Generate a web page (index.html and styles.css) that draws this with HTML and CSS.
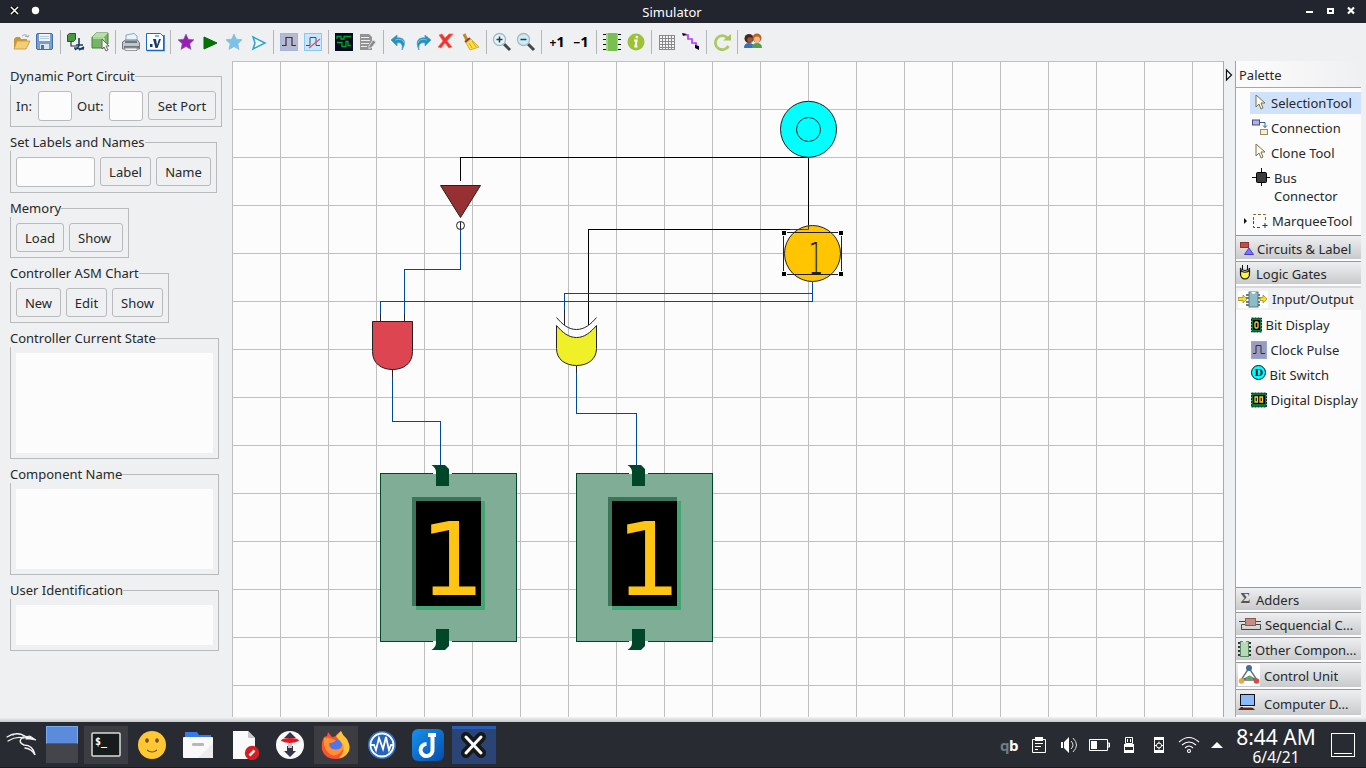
FILE: index.html
```html
<!DOCTYPE html>
<html lang="en">
<head>
<meta charset="utf-8">
<title>Simulator</title>
<link rel="stylesheet" href="styles.css">
</head>
<body>
<header class="titlebar">
  <svg class="win-left" width="60" height="23"><path d="M11.500 7.500l6 6M17.500 7.500l-6 6" stroke="#000" stroke-width="3.500"/><path d="M11 7l7 7M18 7l-7 7" stroke="#fff" stroke-width="1.500"/><circle cx="35.500" cy="10.500" r="3.700" fill="#fff"/></svg>
  <span class="win-title">Simulator</span>
  <svg class="win-right" width="60" height="23"><path d="M0 12h7" stroke="#fff" stroke-width="2"/><rect x="22" y="9" width="5" height="4" fill="none" stroke="#fff" stroke-width="2"/><path d="M42 7.500l6 6M48 7.500l-6 6" stroke="#fff" stroke-width="2.200"/></svg>
</header>

<nav class="toolbar">
  <svg viewBox="0 0 24 24"><path d="M5 19V9l2-2h4l1 2h6v3H8z" fill="#c99632"/><path d="M5 19l3-8h13l-4 8z" fill="#f4ce74" stroke="#c6a253"/><path d="M13 6q4-3 6 1l1-2m-1 2l-3-1" fill="none" stroke="#a2a8ac"/></svg>
  <svg viewBox="0 0 24 24"><rect x="3.500" y="3.500" width="16" height="16" rx="1.500" fill="#759fd3" stroke="#446fa6"/><rect x="6" y="4" width="11" height="7" fill="#eef4f7"/><path d="M7 6.500h9M7 8.500h9" stroke="#b7cbd7"/><rect x="7" y="14" width="9" height="5" fill="#dce6e6"/><rect x="8" y="15" width="3" height="4" fill="#51769a"/></svg>
  <i class="sep"></i>
  <svg viewBox="0 0 24 24"><path d="M3.500 5l2-1.500h6v6l-2 2h-6z" fill="#4b9641" stroke="#26591f"/><path d="M7 12v4h6" fill="none" stroke="#24354f" stroke-width="1.200"/><path d="M15 8v8M10 18l10 1M12 15l7 0M11 20l4-4m0 4l5-3" stroke="#1e3e66" stroke-width="1.600"/></svg>
  <svg viewBox="0 0 24 24"><path d="M4 7l4-4h12v11l-4 4H4z" fill="#75b664" stroke="#44813a"/><path d="M4 7l4-4h12l-4 4z" fill="#b9dfa9"/><path d="M5 8h11v9" fill="none" stroke="#dff1d7"/><path d="M14 9v10l2-2 2 4 2-1-2-4h3z" fill="#f7f7f7" stroke="#666"/></svg>
  <i class="sep"></i>
  <svg viewBox="0 0 24 24"><path d="M7 11V5l8-1.500 3 2.500v6z" fill="#e5f4ff" stroke="#8aaac3"/><path d="M3.500 12l3-2h12l2 3v6h-17z" fill="#c1c5cc" stroke="#737780"/><path d="M6 12h12M5 17h15" stroke="#555d67" stroke-width="1.500"/><path d="M6 18h12v2.500H6z" fill="#f7f7f7" stroke="#999"/></svg>
  <svg viewBox="0 0 24 24"><path d="M3.500 3.500h14l3 3v14h-17z" fill="#fff" stroke="#1e6bc5"/><path d="M4 20.500h17V5" fill="none" stroke="#1c65bd" stroke-width="1.500"/><path d="M10 9h3l1 6 2-6h2l-3.500 9h-2z" fill="#173a6a"/><path d="M7 14h2.500v3H7z" fill="#173a6a"/><path d="M12 6h4" stroke="#7fb7e7" stroke-width="2"/></svg>
  <i class="sep"></i>
  <svg viewBox="0 0 24 24"><path d="M12 4l2.300 5.200 5.700.6-4.200 3.900 1.200 5.700-5-2.900-5 2.900 1.200-5.700L4 9.800l5.700-.6z" fill="#9520b1" stroke="#8c50a0" stroke-width=".6"/></svg>
  <svg viewBox="0 0 24 24"><path d="M6 7l13 6-13 6z" fill="#007500" stroke="#056105"/></svg>
  <svg viewBox="0 0 24 24"><path d="M12 4l2.300 5.200 5.700.6-4.200 3.900 1.200 5.700-5-2.900-5 2.900 1.200-5.700L4 9.800l5.700-.6z" fill="#7bc2e9" stroke="#8ab9d5" stroke-width=".8"/></svg>
  <svg viewBox="0 0 24 24"><path d="M7 7l12 6-12 6 2-6z" fill="#eff8fc" stroke="#29a3d0" stroke-width="1.500"/></svg>
  <i class="sep"></i>
  <svg viewBox="0 0 24 24"><rect x="3.500" y="3.500" width="17" height="17" fill="#b9b8d1" stroke="#9eb9de"/><path d="M5 15.500h4v-8h6v8h4" fill="none" stroke="#303248" stroke-width="1.200"/></svg>
  <svg viewBox="0 0 24 24"><rect x="3.500" y="3.500" width="17" height="17" fill="#c6e7ff" stroke="#8bc9f3"/><path d="M5 15.500h4v-8h6v8h4" fill="none" stroke="#385469"/><path d="M8 18L19 9" stroke="#f04954" stroke-width="1.200"/></svg>
  <i class="sep"></i>
  <svg viewBox="0 0 24 24"><rect x="3" y="3" width="18" height="18" fill="#020b20"/><path d="M5 9V6.500h4V9h3V6.500h7M5 12.500h5v4h4v-5h2v4h3" fill="none" stroke="#08a522" stroke-width="1.300"/></svg>
  <svg viewBox="0 0 24 24"><path d="M4 4h9l3 3v13H4z" fill="#939393"/><path d="M5 7.500h8m-8 3h9m-9 3h8m-8 3h6" stroke="#ececec"/><path d="M13 16l4-6 3 2-4 5-3 2z" fill="#888" stroke="#ddd"/></svg>
  <i class="sep"></i>
  <svg viewBox="0 0 24 24"><path d="M4 10l6-5v3c7-1 10 4 5 12 1-6-1-8-5-7v3z" fill="#238fbd" stroke="#559ec6" stroke-width=".8"/><path d="M8 10q8-2 9 3" fill="none" stroke="#67c7e7"/></svg>
  <svg viewBox="0 0 24 24"><path d="M20 10l-6-5v3C7 7 4 12 8 20c-1-6 2-8 6-7v3z" fill="#238fbd" stroke="#559ec6" stroke-width=".8"/><path d="M16 10Q8 8 7 13" fill="none" stroke="#67c7e7"/></svg>
  <svg viewBox="0 0 24 24"><path d="M4 5l3-1 3 4 4-4h4l-6 7 5 6-3 1-4-5-4 5-3-1 5-6z" fill="#ed3434" stroke="#ff6a52" stroke-width=".7"/></svg>
  <svg viewBox="0 0 24 24"><path d="M5 4l3 6" stroke="#bd8c20" stroke-width="3"/><path d="M7 13l5-4 8 8-9 3z" fill="#ffe13e" stroke="#c69f28" stroke-width=".8"/><path d="M6 12l5-4" stroke="#9a313b" stroke-width="2"/><path d="M10 13l3 5m0-7l4 6" stroke="#c5a327"/></svg>
  <i class="sep"></i>
  <svg viewBox="0 0 24 24"><path d="M14 14l6 6" stroke="#42484b" stroke-width="3"/><circle cx="9.500" cy="9.500" r="6" fill="#e0f6fd" stroke="#a6b9c1" stroke-width="1.300"/><path d="M6.500 9.500h6m-3-3v6" stroke="#293a45" stroke-width="1.500"/></svg>
  <svg viewBox="0 0 24 24"><path d="M14 14l6 6" stroke="#42484b" stroke-width="3"/><circle cx="9.500" cy="9.500" r="6" fill="#cbedf9" stroke="#a6b9c1" stroke-width="1.300"/><path d="M6.500 9.500h6" stroke="#293a45" stroke-width="1.500"/></svg>
  <i class="sep"></i>
  <b class="step"><small>+</small>1</b>
  <b class="step"><small>−</small>1</b>
  <i class="sep"></i>
  <svg viewBox="0 0 24 24"><path d="M3 4.500h18M3 9.500h18M3 14.500h18M3 19.500h18" stroke="#111"/><rect x="6" y="3" width="12" height="18" fill="#a4d684"/><rect x="8" y="3" width="9" height="18" fill="#79bf52"/></svg>
  <svg viewBox="0 0 24 24"><circle cx="12" cy="12" r="8.500" fill="#9dc335"/><path d="M13 6l-.5 2.300M10 10.500h2.500l-1 6h2" fill="none" stroke="#fff" stroke-width="2.200"/></svg>
  <i class="sep"></i>
  <svg viewBox="0 0 24 24" shape-rendering="crispEdges"><path d="M4.500 5.500h15v14h-15zM7.500 5v14m3-14v14m3-14v14m3-14v14M4 8.500h15M4 11.500h15M4 14.500h15M4 17.500h15" fill="#f5f5f5" stroke="#8a8a8a"/></svg>
  <svg viewBox="0 0 24 24"><path d="M5 5h4v4h4v4h4v4h2" fill="none" stroke="#b33cff" stroke-width="1.700"/><path d="M3 3l5 1-4 2zm13 12l4 1v4l-4-2z" fill="#080018"/></svg>
  <i class="sep"></i>
  <svg viewBox="0 0 24 24"><path d="M17.500 8a7 7 0 1 0 1 8" fill="none" stroke="#adc963" stroke-width="2.800"/><path d="M13 10.500h8V4z" fill="#a8c45b"/></svg>
  <i class="sep"></i>
  <svg viewBox="0 0 24 24"><circle cx="8" cy="8.500" r="4.500" fill="#47271b"/><circle cx="9" cy="10" r="2.800" fill="#9b5540"/><path d="M3 18q0-5 5-5t5 5z" fill="#3572bc"/><circle cx="16" cy="8" r="4.500" fill="#b8622e"/><circle cx="16" cy="9.500" r="3" fill="#f3b77e"/><path d="M11 18q0-5 5-5t5 5z" fill="#50a14b"/></svg>
</nav>

<main class="workspace">
  <aside class="side">
    <section class="group g1"><h2>Dynamic Port Circuit</h2><div class="row"><label class="l-in">In:</label><span class="field port"></span><label class="l-out">Out:</label><span class="field port"></span><button class="w68">Set Port</button></div></section>
    <section class="group g2"><h2>Set Labels and Names</h2><div class="row"><span class="field name"></span><button class="w51">Label</button><button class="w55">Name</button></div></section>
    <section class="group g3"><h2>Memory</h2><div class="row"><button class="w48">Load</button><button class="w54 show">Show</button></div></section>
    <section class="group g4"><h2>Controller ASM Chart</h2><div class="row"><button class="w45">New</button><button class="w41">Edit</button><button class="w51">Show</button></div></section>
    <section class="group g5"><h2>Controller Current State</h2><div class="area"></div></section>
    <section class="group g6"><h2>Component Name</h2><div class="area"></div></section>
    <section class="group g7"><h2>User Identification</h2><div class="area"></div></section>
  </aside>

  <svg class="circuit" viewBox="232 61 992 656" width="992" height="656">
    <defs>
      <pattern id="grid" x="232" y="61" width="48" height="48" patternUnits="userSpaceOnUse"><path d="M.5 48V.5H48" fill="none" stroke="#bfbfbf" shape-rendering="crispEdges"/></pattern>
      <g id="display">
        <rect x="380.500" y="473.500" width="136" height="168" fill="#7fad96" stroke="#00472a"/>
        <path d="M433 473.500h19M433 641.500h19" stroke="#fcfcfc"/>
        <path d="M431.500 465H445l4 4v17h-13v-14q0-4-4.500-7zM436 629h13v17l-4 4h-13.500q4.500-3 4.500-7z" fill="#00472a"/>
        <path d="M412 606V497h69v4h-65v105z" fill="#3c755a"/><path d="M416 610v-4h65V501h4v109z" fill="#44a572"/>
        <rect x="416" y="501" width="65" height="105" fill="#000"/>
        <text x="420" y="595" class="digit">1</text>
      </g>
    </defs>
    <rect x="232" y="61" width="992" height="656" fill="#fcfcfc"/>
    <rect x="232" y="61" width="992" height="656" fill="url(#grid)"/>
    <path d="M1223.500 61v656" stroke="#aaa"/>
    <g fill="none" shape-rendering="crispEdges">
      <path d="M460.500 181V157.500H808.500V229.500H588.500V325" stroke="#000"/>
      <path d="M460.500 229V269.500H404.500V314M812.500 282V301.500H380.500V314M812.500 293.500H564.500V310M392.500 377V421.500H440.500V466M576.500 373V413.500H636.500V466" stroke="#004a9c"/>
      <path d="M404.500 314v8M380.500 314v8M564.500 310v15M392.500 369v8M576.500 365v8" stroke="#222"/>
    </g>
    <g stroke="#222">
      <path d="M440.500 185.500h40l-20 32z" fill="#963033"/>
      <circle cx="460.500" cy="225.500" r="4" fill="none"/><path d="M460.500 222v8"/>
      <path d="M372.500 321.500h40v30c0 12-9 18-20 18s-20-6-20-18z" fill="#dd4550"/>
      <path d="M556.500 325.500c6 7 12 12 20 12s14-5 20-12v23c0 11-9 17-20 17s-20-6-20-17z" fill="#eff028"/>
      <path d="M556.500 317.500c6 7 12 12 20 12s14-5 20-12" fill="none"/>
      <circle cx="808.500" cy="129.300" r="28" fill="#0ff"/><circle cx="808.500" cy="129.500" r="12" fill="none"/>
      <circle cx="812.500" cy="253.500" r="28" fill="#ffc500"/>
    </g>
    <path d="M808.500 225v4.500H790" fill="none" stroke="#4a3c10"/>
    <text class="thin" transform="translate(808 275) scale(.53 1)">1</text>
    <rect x="783.500" y="232.500" width="58" height="42" fill="none" stroke="#222"/>
    <path d="M781.500 230.500h5v5h-5zM838.500 230.500h5v5h-5zM781.500 271.500h5v5h-5zM838.500 271.500h5v5h-5z" fill="#000" stroke="#fcfcfc"/>
    <use href="#display"/><use href="#display" x="196"/>
  </svg>

  <div class="splitter"><svg width="10" height="14"><path d="M2.500 2v10l5-5z" fill="#fff" stroke="#111" stroke-width="1.200"/></svg></div>
  <aside class="palette">
    <h2 class="p-title">Palette</h2>
    <div class="tools">
      <div class="item selected"><svg viewBox="0 0 20 18"><path d="M5 1v12l3-3 2 5 2-1-2-5h4z" fill="#fffbea" stroke="#777254"/></svg><span>SelectionTool</span></div>
      <div class="item"><svg viewBox="0 0 20 18"><rect x="1.500" y="1" width="7" height="5" fill="#aeb6df" stroke="#484c87"/><rect x="9.500" y="10.500" width="7" height="5" fill="#f5eed2" stroke="#9a8b60"/><path d="M9 3.500h5v5m-2-2l2 2 2-2" fill="none" stroke="#365f90"/></svg><span>Connection</span></div>
      <div class="item"><svg viewBox="0 0 20 18"><path d="M5 1v12l3-3 2 5 2-1-2-5h4z" fill="#fffbea" stroke="#777254"/></svg><span>Clone Tool</span></div>
      <div class="item bus"><svg viewBox="0 0 20 18"><path d="M1 9.500h18M10.500 0v18" stroke="#111"/><rect x="5.500" y="4.500" width="10" height="10" rx="1" fill="#3c3c3c" stroke="#000"/></svg><span>Bus<br>Connector</span></div>
      <div class="item marquee"><svg viewBox="0 0 26 18"><path d="M1 6l3 3-3 3z" fill="#111"/><path d="M10.500 8V2.500h12V10" fill="none" stroke="#806a22" stroke-dasharray="3 2"/><path d="M10.500 9v6.500h8" fill="none" stroke="#17558f" stroke-dasharray="3 2"/><path d="M22 11v5m-2.500-2.500h5" stroke="#173b6f"/></svg><span>MarqueeTool</span></div>
    </div>
    <div class="head h-circuits"><svg width="14" height="16"><rect x=".5" y="2.500" width="8" height="5" fill="#bd5146" stroke="#8d342e"/><path d="M4.500 14.500h9L9 8z" fill="#7b74ff" stroke="#4b3ad2"/></svg><span>Circuits &amp; Label</span></div>
    <div class="head"><svg width="14" height="18"><path d="M2.500 6c2 3 7 3 9 0v4c0 3-2 5-4.500 5s-4.500-2-4.500-5z" fill="#fff53d" stroke="#111" stroke-width="1.200"/><path d="M2 4q5 5 10 0M4.500 1v5M9.500 1v5" fill="none" stroke="#111"/></svg><span>Logic Gates</span></div>
    <div class="head open"><svg width="30" height="17"><rect width="30" height="17" fill="#fff"/><path d="M0 6.500h5V4l4 4-4 4V9.500H0zM22 6.500h3V4l4 4-4 4V9.500h-3z" fill="#ffdf18" stroke="#8d7b22" stroke-width=".7"/><path d="M8 4h14m-14 3h14m-14 4h14m-14 3h14" stroke="#777" stroke-width="2"/><rect x="11" y="1" width="9" height="15" fill="#8cbcc6" stroke="#537c84"/><path d="M13 1q2.500 4 5 0" fill="#fff"/></svg><span>Input/Output</span></div>
    <div class="io">
      <div class="item"><svg width="11" height="16"><rect x=".5" y="1" width="10" height="14" fill="#087345" stroke="#013c24" stroke-dasharray="2 1"/><rect x="2" y="3" width="7" height="10"/><rect x="4" y="5" width="3" height="6" rx="1" fill="none" stroke="#ffd32b" stroke-width="1.300"/></svg><span>Bit Display</span></div>
      <div class="item"><svg width="16" height="18"><rect x=".5" y=".5" width="15" height="17" fill="#9c9bbd" stroke="#92abd9"/><path d="M2 12.500h3v-8h5v8h4" fill="none" stroke="#2a2f49"/></svg><span>Clock Pulse</span></div>
      <div class="item"><svg width="15" height="18"><circle cx="7.500" cy="7.500" r="7" fill="#0ff" stroke="#111"/><text x="3.500" y="11" class="dglyph">D</text></svg><span>Bit Switch</span></div>
      <div class="item"><svg width="16" height="16"><rect x=".5" y="1" width="15" height="14" fill="#087345" stroke="#013c24" stroke-dasharray="2 1"/><rect x="2" y="3" width="12" height="9"/><path d="M4 5h2.500v5H4zm5 0h2.500v5H9z" fill="none" stroke="#ffd32b" stroke-width="1.300"/></svg><span>Digital Display</span></div>
    </div>
    <div class="lower">
      <div class="head adders"><svg width="14" height="16"><text x="2.500" y="12" class="sigma">Σ</text></svg><span>Adders</span></div>
      <div class="head seq"><svg width="23" height="18"><path d="M1 6.500h22M3.500 14.500v-5h19v5z" fill="none" stroke="#444"/><rect x="7.500" y="3.500" width="10" height="7" fill="#c58c84" stroke="#885d56"/></svg><span>Sequencial C...</span></div>
      <div class="head other"><svg width="13" height="18"><path d="M0 3h13M0 7h13M0 11h13M0 15h13" stroke="#333" stroke-width="2"/><rect x="2.500" y="1.500" width="8" height="15" fill="#b4dab6" stroke="#5c8963"/><path d="M4.500 1q2 3 4 0" fill="#eee"/></svg><span>Other Compon...</span></div>
      <div class="head ctl"><svg width="22" height="22"><rect width="22" height="22" fill="#fff"/><path d="M11 4L3 16h16zM11.500 13L3 16m9-3l7 3" fill="none" stroke="#647370" stroke-width="1.400"/><circle cx="11" cy="4" r="3" fill="#446e9a"/><circle cx="3.500" cy="17" r="2.800" fill="#eba83a"/><circle cx="18.500" cy="17" r="2.800" fill="#d34c46"/><circle cx="11.500" cy="14" r="2.500" fill="#65a563"/></svg><span>Control Unit</span></div>
      <div class="head comp"><svg width="18" height="19"><rect x="2.500" y="1.500" width="14" height="11" fill="#8cbaff" stroke="#111"/><path d="M3 14h11l3 3H0z" fill="#6b2310"/><path d="M5 13h10v1.500H5z" fill="#f5f5f5"/></svg><span>Computer D...</span></div>
    </div>
  </aside>
</main>
<div class="window-edge"></div>

<footer class="taskbar">
  <svg class="dragon" width="46" height="46" fill="none" stroke="#f2f2f2" stroke-linecap="round"><path d="M7 15q9-6 18-1l3 1M8 19q8-5 16-3M13 13q6-3 11 1" stroke-width="1.300"/><path d="M23 15q-6 5 1 8 9 0 11 10-3-6-10-7" stroke-width="1.500"/><path d="M24 15l6-1 6 4-6-1-4 0" fill="#f2f2f2"/></svg>
  <div class="pager"><i></i></div>
  <div class="task term"><svg width="30" height="26"><rect x="1" y="1" width="28" height="23" rx="1" fill="#171b1b" stroke="#d6ddda" stroke-width="1.500"/><text x="4" y="13" class="prompt">$_</text></svg></div>
  <div class="task"><svg width="30" height="30"><circle cx="15" cy="15" r="14" fill="#ffc832"/><ellipse cx="10" cy="10.500" rx="1.800" ry="2.200" fill="#73511c"/><ellipse cx="20" cy="10.500" rx="1.800" ry="2.200" fill="#73511c"/><path d="M10 20q5 4 10 0" fill="none" stroke="#73511c" stroke-width="1.200"/></svg></div>
  <div class="task"><svg width="30" height="30"><path d="M2 4V2h12l2 3h12v7H2z" fill="#367bed"/><rect y="7" width="30" height="21" rx="1" fill="#f9f9f9"/><path d="M30 13v15H15z" fill="#ececec"/><rect x="9" y="13" width="12" height="3" rx="1" fill="#b8b8b8"/></svg></div>
  <div class="task"><svg width="30" height="30"><path d="M4 1h15l7 7v21H4z" fill="#fafafa"/><path d="M19 1l7 7h-7z" fill="#c8c8c8"/><circle cx="23" cy="23" r="7.200" fill="#d41e24"/><path d="M20.500 25.500l5-5" stroke="#fff" stroke-width="2.500"/></svg></div>
  <div class="task"><svg width="30" height="30"><circle cx="15" cy="15" r="14" fill="#fafafa"/><path d="M15 2l6 6H9zm-3 14h6v5h3l-6 6-6-6h3z" fill="#34364b"/><path d="M6 11q0-3 9-3t9 3q-9 4-18 0z" fill="#e11824"/><path d="M13 13h4v5h-4z" fill="#c5c7cc"/></svg></div>
  <div class="task fox"><svg width="30" height="30"><path d="M3 7l3-1 1-4 4 5q4 0 5-3l4-3q2 6 6 8 3 6 2 11-3 9-13 9Q4 29 1 20q-1-8 2-13z" fill="#ff5033"/><path d="M15 6l5-5q2 5 5 7 5 7 3 13-4 7-10 7 8-8 2-16-4-4-5-6z" fill="#ffc338"/><circle cx="14.500" cy="15" r="6" fill="#5276ea"/><path d="M3 8q5-1 8 1l4 1q-2 3-7 3 0 8 10 6 5-2 2-8 5 7-1 12-8 6-14-3-3-5-2-12z" fill="#ff9232"/></svg></div>
  <div class="task"><svg width="30" height="30"><circle cx="15" cy="15" r="14" fill="#3072c8"/><circle cx="15" cy="15" r="11.500" fill="#2762bd" stroke="#fff" stroke-width="1.800"/><path d="M3 15h4l2 5 3-12 4 11 3-12 3 13 2-5h3" fill="none" stroke="#fff" stroke-width="1.800"/></svg></div>
  <div class="task"><svg width="32" height="32"><defs><linearGradient id="blue" x2="1" y2="1"><stop stop-color="#1691ee"/><stop offset="1" stop-color="#064eaa"/></linearGradient></defs><rect width="32" height="32" rx="6" fill="url(#blue)"/><path d="M16 6h8M20.500 6v14a6 6 0 1 1-6-5" fill="none" stroke="#fff" stroke-width="4"/></svg></div>
  <div class="task active"><svg width="30" height="30"><path d="M7 7l15 16M22 7L7 23" stroke="#171818" stroke-width="10" stroke-linecap="round"/><path d="M7 7l15 16M22 7L7 23" stroke="#fff" stroke-width="3" stroke-linecap="round"/></svg></div>
  <div class="tray">
    <span class="qb"><i>q</i>b</span>
    <svg viewBox="0 0 30 20"><path d="M8.500 4.500h13v13h-13z" fill="none" stroke="#fff"/><path d="M11 2h8v4h-8z" fill="#fff"/><path d="M11 8.500h8m-8 3h6m-6 3h3" stroke="#fff"/></svg>
    <svg viewBox="0 0 30 20"><path d="M7 7h2v6H7zM10 7l5-5v16l-5-5z" fill="#fff"/><path d="M17 6q4 4 0 8m2-11q7 7 0 14" fill="none" stroke="#ddd"/></svg>
    <svg viewBox="0 0 30 20"><path d="M5.500 4.500h18v11h-18zM24 8h1.500v4H24z" fill="none" stroke="#fff"/><path d="M7 6h6v8H7z" fill="#fff"/></svg>
    <svg viewBox="0 0 30 20"><path d="M11.500 2.500h7v6h-7zM10.500 9.500h9v8h-9z" fill="none" stroke="#fff"/><path d="M10 9h10v3H10zM10 15h10v3H10zM13 4h1v3h-1zm3 0h1v3h-1z" fill="#fff"/></svg>
    <svg viewBox="0 0 30 20"><rect x="10.500" y="2.500" width="9" height="15" fill="none" stroke="#fff"/><path d="M10 2h10v3H10zM10 15h10v3H10z" fill="#fff"/><circle cx="15" cy="10.500" r="2.500" fill="none" stroke="#fff"/><path d="M15 6.500v2m0 4v2m-4-4h2m4 0h2" stroke="#fff"/></svg>
    <svg viewBox="0 0 30 20"><g fill="none" stroke="#fff" stroke-width="1.100"><path d="M5 7q10-9 20 0M8 10q7-6 14 0M11 13q4-4 8 0"/><circle cx="15" cy="16" r="1.500"/></g></svg>
    <svg viewBox="0 0 30 20"><path d="M7 13l6-6 6 6z" fill="#fff"/></svg>
  </div>
  <div class="clock"><span>8:44 AM</span><small>6/4/21</small></div>
  <svg class="desktop" width="26" height="26"><rect x="1.500" y="1.500" width="23" height="23" fill="none" stroke="#fff"/><path d="M4 21.500h18" stroke="#fff"/></svg>
</footer>
</body>
</html>
```
FILE: styles.css
```css
* { box-sizing: border-box; }
body { margin: 0; width: 1366px; height: 768px; overflow: hidden; display: flex; flex-direction: column; background: #eff0f1; color: #26282a; font: 13px/18px "Noto Sans", sans-serif; }
svg { display: block; flex: none; }
h2, button { font: inherit; margin: 0; }
.titlebar { height: 23px; background: #22252e; display: grid; grid-template-columns: 60px 1fr 60px; color: #fff; }
.win-title { text-align: center; line-height: 24px; padding-right: 22px; }
.toolbar { height: 38px; padding: 0 9px; display: flex; align-items: center; }
.toolbar svg { width: 24px; height: 24px; }
.sep { width: 7px; height: 24px; border-left: 1px solid #b4b5b6; flex: none; margin-left: 3px; margin-right: -3px; }
.step { width: 24px; text-align: center; font: bold 15px/20px "Noto Sans", sans-serif; color: #000; letter-spacing: -.3px; }
.step small { font-size: 12px; }
.workspace { height: 656px; display: flex; }
.side { width: 232px; padding: 15px 0 0 10px; }
.group { border: 1px solid #b9babb; padding: 0 5px; display: flex; flex-direction: column; }
.group h2 { height: 18px; margin: -10px 0 0 -6px; align-self: flex-start; background: #eff0f1; white-space: nowrap; }
.row { display: flex; align-items: flex-start; gap: 5px; margin-top: 6px; }
.row label { line-height: 30px; }
.l-in { width: 17px; }
.l-out { width: 27px; }
.row button { height: 29px; padding: 1px 0 0; text-align: center; border: 1px solid #b9babb; border-radius: 3px; background: #eff0f1; color: inherit; line-height: 26px; white-space: nowrap; }
.row .show { padding-right: 3px; }
.field { height: 30px; border: 1px solid #b9babb; border-radius: 3px; background: #fcfcfc; }
.port { width: 34px; }
.name { width: 79px; }
.w41 { width: 41px; } .w45 { width: 45px; } .w48 { width: 48px; } .w51 { width: 51px; } .w54 { width: 54px; } .w55 { width: 55px; } .w68 { width: 68px; }
.g1 { width: 212px; height: 51px; }
.g2 { width: 207px; height: 51px; margin-top: 15px; }
.g3 { width: 119px; height: 50px; margin-top: 15px; }
.g4 { width: 159px; height: 50px; margin-top: 15px; }
.g5 { width: 209px; height: 121px; margin-top: 15px; }
.g6 { width: 209px; height: 101px; margin-top: 15px; }
.g7 { width: 209px; height: 61px; margin-top: 15px; }
.area { background: #fcfcfc; flex: 1; margin: 6px 0 5px; }
.digit { font: 102px "DejaVu Sans", sans-serif; fill: #ffc512; }
.thin { font: 46px "DejaVu Sans", sans-serif; fill: #222; stroke: #ffc500; stroke-width: 1.8px; }
.splitter { width: 11px; padding-top: 7px; }
.palette { width: 126px; border-left: 1px solid #a2a3a4; background: #fcfcfc; display: flex; flex-direction: column; }
.p-title { height: 27px; padding-left: 3px; line-height: 28px; border-bottom: 1px solid #a6a7a8; background: linear-gradient(90deg, #fcfcfc, #eff0f1); }
.tools { height: 147px; padding-top: 3px; }
.item { height: 25px; display: flex; align-items: center; padding-left: 15px; white-space: nowrap; }
.tools .item svg { width: 20px; height: 18px; }
.tools .item.selected { margin: 1px 0 1px 14px; padding-left: 1px; background: #cee2fb; height: 22px; }
.item.selected svg, .item:nth-child(3) svg { margin-bottom: 1px; }
.tools .bus { height: 43px; align-items: flex-start; line-height: 18px; padding-top: 4px; }
.bus svg { margin-top: -1px; }
.bus span { padding-left: 3px; }
.tools .marquee { padding-left: 7px; }
.tools .marquee svg { width: 26px; }
.marquee span { padding-left: 3px; }
.head { height: 25px; flex: none; border-top: 1px solid #97989a; border-bottom: 2px solid #fcfcfc; background: linear-gradient(#eeeff0, #c9cacc); display: flex; align-items: center; gap: 4px; padding-left: 2px; white-space: nowrap; overflow: hidden; }
.head span { padding-top: 2px; }
.h-circuits { height: 26px; }
.h-circuits svg { margin: 0 -1px 0 2px; }
.open { height: 24px; background: #f0f1f2; border-bottom: 0; border-top: 2px solid #d8d9da; }
.open span { padding-top: 0; }
.io { padding-top: 2px; }
.io .item { gap: 3.5px; }
.lower { margin-top: auto; display: flex; flex-direction: column; }
.head.seq { gap: 4px; }
.head.ctl { height: 27px; gap: 4px; }
.head.comp { height: 28px; gap: 8px; }
.dglyph { font: bold 10px "DejaVu Serif", serif; fill: #123; }
.sigma { font: bold 15px "Liberation Serif", serif; fill: #555; }
.prompt { font: bold 10px "DejaVu Sans Mono", monospace; fill: #fff; }
.window-edge { height: 5px; background: linear-gradient(#f3f4f5, #c8c9cb); }
.taskbar { height: 46px; display: flex; background: #282b32; border-bottom: 1px solid #191922; color: #fff; }
.pager { width: 32px; height: 37px; margin: 4px 5px 0 0; background: #43454a; }
.pager i { display: block; height: 18px; background: #5b8bdd; border: 1px solid #79a9f0; border-bottom-color: #2062c7; }
.task { width: 46px; height: 38px; margin-top: 4px; display: flex; align-items: center; justify-content: center; }
.term, .fox { background: #3b3d43; border: solid #282b32; border-width: 0 1px; }
.active { background: #2a4476; border: solid #282b32; border-width: 0 1px; box-shadow: inset 0 3px #285dba; }
.tray { display: flex; margin-left: 497px; align-items: center; }
.tray svg { width: 30px; height: 20px; }
.qb { width: 30px; text-align: center; font: bold 15px/20px "Open Sans", sans-serif; letter-spacing: -.5px; }
.qb i { font-style: normal; color: #777a7f; }
.clock { width: 84px; display: flex; flex-direction: column; align-items: center; padding-top: 3px; }
.clock span { font-size: 21px; line-height: 24px; white-space: nowrap; }
.clock small { font-size: 15.5px; line-height: 16px; }
.desktop { margin: 10px 0 0 12px; }
```
